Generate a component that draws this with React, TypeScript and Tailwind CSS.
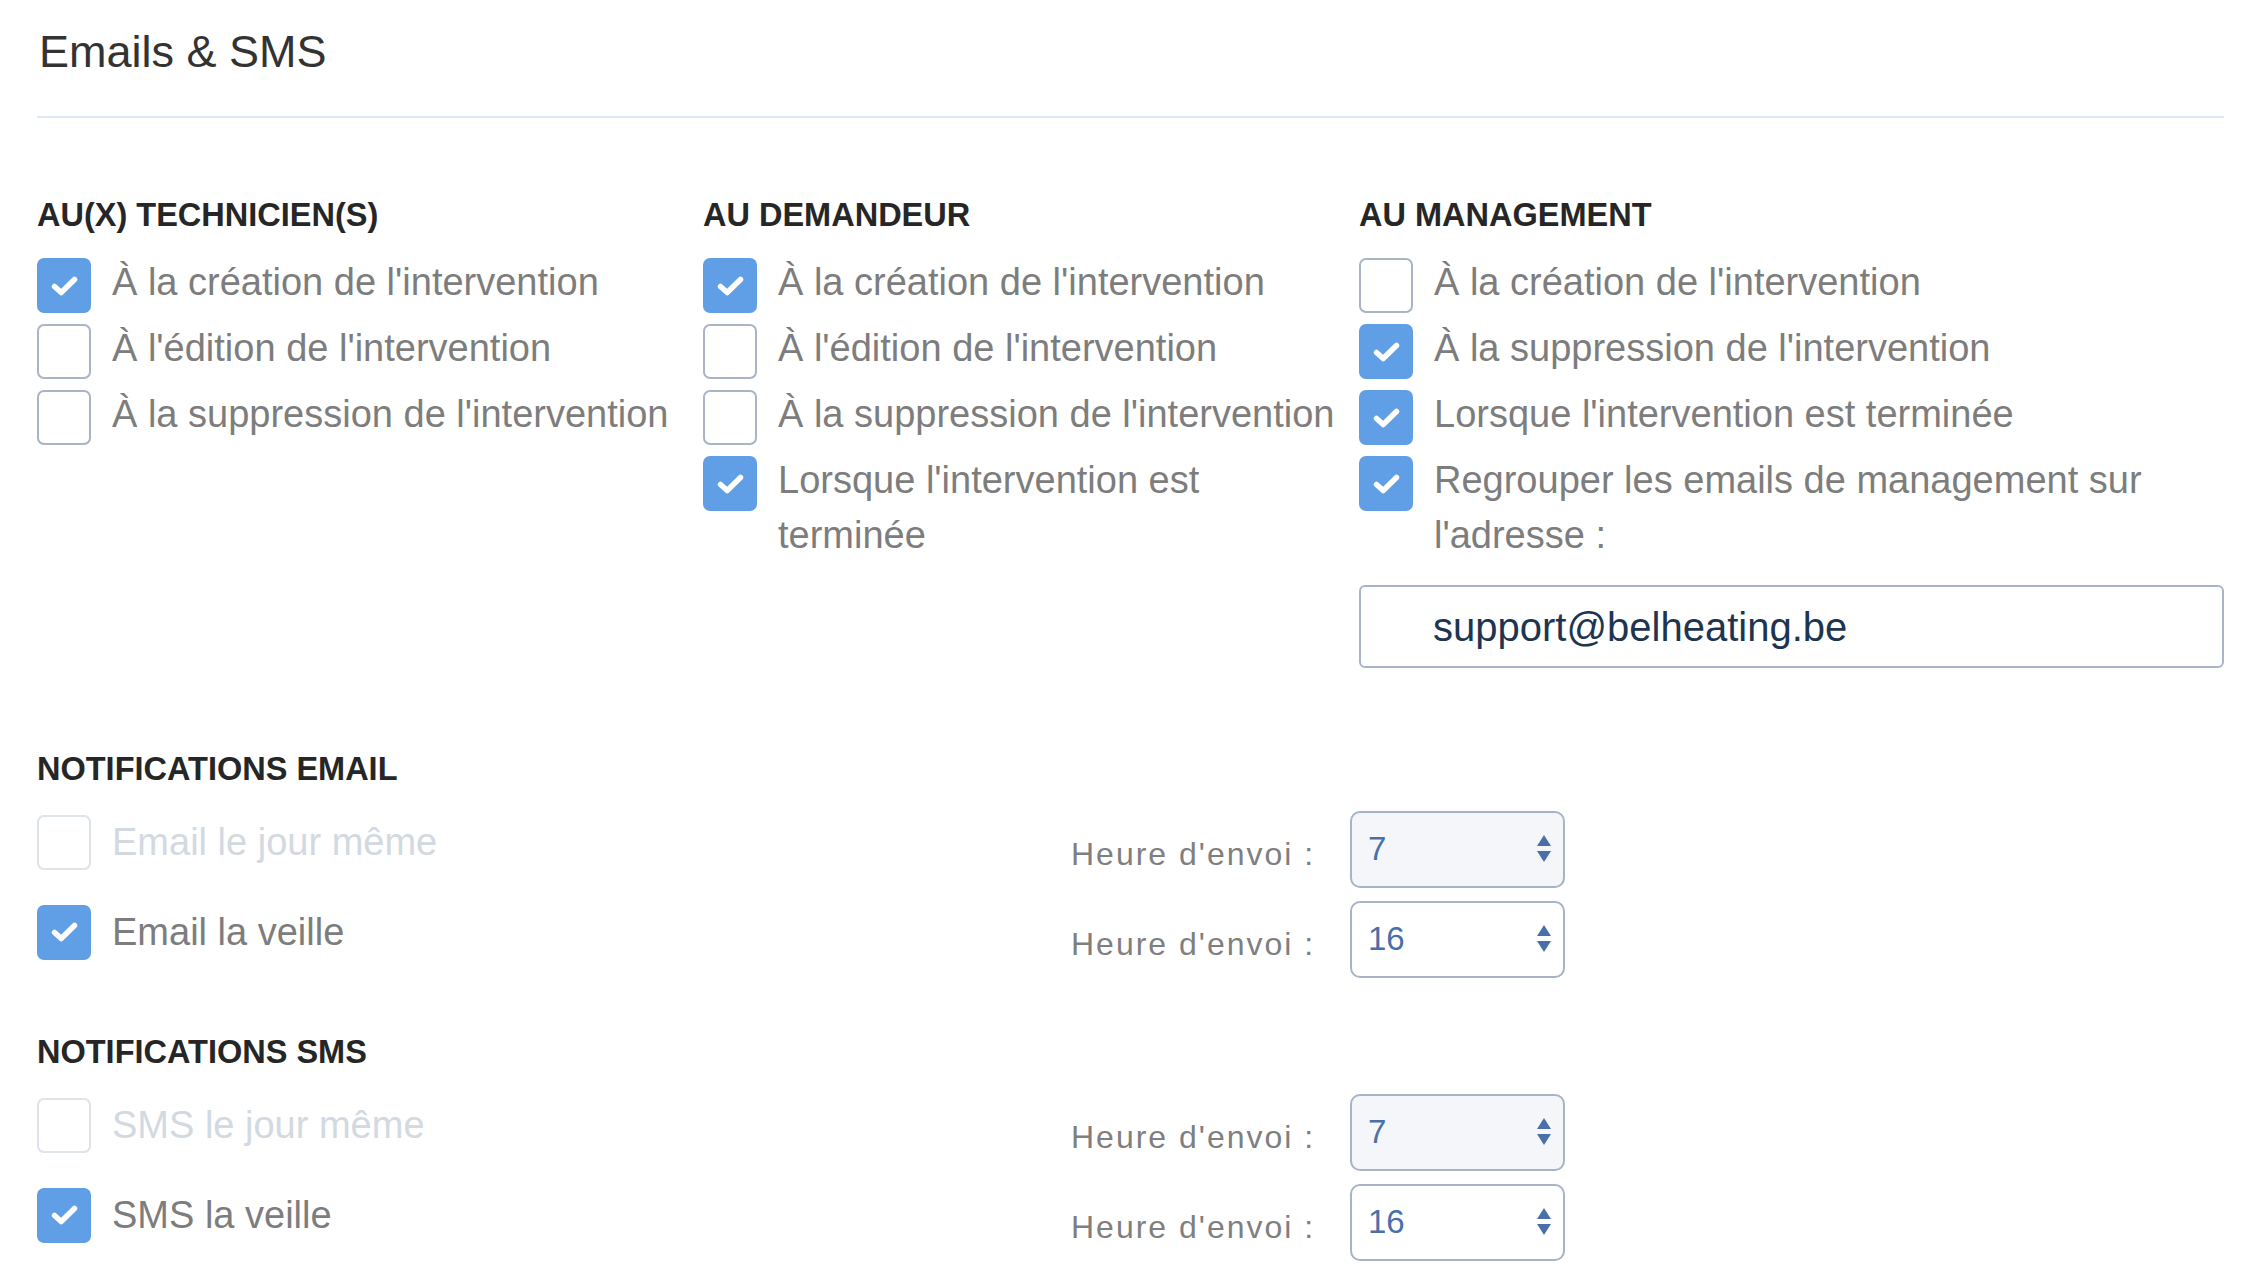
import React from "react";

function Check() {
  return (
    <svg width="27" height="20" viewBox="0 0 27 20" fill="none">
      <path d="M3.5 10.5 L10.2 16.5 L23.5 3.5" stroke="white" strokeWidth="5.5" strokeLinecap="round" strokeLinejoin="round" />
    </svg>
  );
}

function Box({ checked, disabled }: { checked?: boolean; disabled?: boolean }) {
  if (checked) {
    return (
      <div className="flex h-[55px] w-[54px] shrink-0 items-center justify-center rounded-[7px] bg-[#609ee6]">
        <Check />
      </div>
    );
  }
  return (
    <div
      className={
        disabled
          ? "h-[55px] w-[54px] shrink-0 rounded-[7px] border-2 border-[#dfe3ea] bg-white"
          : "h-[55px] w-[54px] shrink-0 rounded-[7px] border-2 border-[#a9b4c5] bg-white"
      }
    />
  );
}

function Row({ checked, children }: { checked?: boolean; children: React.ReactNode }) {
  return (
    <div className="flex items-start gap-[21px]">
      <div className="mt-[3px]">
        <Box checked={checked} />
      </div>
      <div className="text-[38px] leading-[55px] text-[#7d7d7d]">{children}</div>
    </div>
  );
}

function Heading({ children }: { children: React.ReactNode }) {
  return <div className="text-[32.5px] font-bold leading-[40px] text-[#262626]">{children}</div>;
}

function Arrows() {
  return (
    <svg width="14" height="28" viewBox="0 0 14 28">
      <path d="M0 11 L7 0 L14 11 Z" fill="#4a70a8" />
      <path d="M0 16 L14 16 L7 27 Z" fill="#4a70a8" />
    </svg>
  );
}

function Select({ value, shaded }: { value: string; shaded?: boolean }) {
  return (
    <div
      className={
        shaded
          ? "flex h-[77px] w-[215px] items-center justify-between rounded-[10px] border-2 border-[#a7b3c6] bg-[#f4f6f9] pl-[16px] pr-[12px]"
          : "flex h-[77px] w-[215px] items-center justify-between rounded-[10px] border-2 border-[#a7b3c6] bg-white pl-[16px] pr-[12px]"
      }
    >
      <span className="text-[33px] leading-[40px] text-[#4a70a8]">{value}</span>
      <Arrows />
    </div>
  );
}

function NotifRow({ checked, label, value, shaded }: { checked?: boolean; label: string; value: string; shaded?: boolean }) {
  return (
    <div className="flex h-[90px] items-center">
      <div className="mb-[14px] flex w-[1034px] items-center gap-[21px]">
        <Box checked={checked} disabled={!checked} />
        <span className={checked ? "text-[38px] leading-[55px] text-[#7d7d7d]" : "text-[38px] leading-[55px] text-[#d3d9e1]"}>
          {label}
        </span>
      </div>
      <div className="mt-[10px] w-[279px] text-[32px] leading-[40px] tracking-[2px] text-[#7f7f7f]">Heure d'envoi :</div>
      <Select value={value} shaded={shaded} />
    </div>
  );
}

export default function App() {
  return (
    <div className="min-h-screen bg-white pl-[37px] pr-[24px] font-['Liberation_Sans',Arial,sans-serif]">
      <h1 className="pt-[26px] pl-[2px] text-[45px] leading-[52px] text-[#333333]">Emails &amp; SMS</h1>
      <div className="mt-[38px] h-[2px] bg-[#dde8f8]" />

      <div className="mt-[77px] grid grid-cols-[666px_656px_1fr]">
        <div>
          <Heading>AU(X) TECHNICIEN(S)</Heading>
          <div className="mt-[20px] flex flex-col gap-[8px]">
            <Row checked>À la création de l'intervention</Row>
            <Row>À l'édition de l'intervention</Row>
            <Row>À la suppression de l'intervention</Row>
          </div>
        </div>
        <div>
          <Heading>AU DEMANDEUR</Heading>
          <div className="mt-[20px] flex flex-col gap-[8px]">
            <Row checked>À la création de l'intervention</Row>
            <Row>À l'édition de l'intervention</Row>
            <Row>À la suppression de l'intervention</Row>
            <Row checked>
              Lorsque l'intervention est
              <br />
              terminée
            </Row>
          </div>
        </div>
        <div>
          <Heading>AU MANAGEMENT</Heading>
          <div className="mt-[20px] flex flex-col gap-[8px]">
            <Row>À la création de l'intervention</Row>
            <Row checked>À la suppression de l'intervention</Row>
            <Row checked>Lorsque l'intervention est terminée</Row>
            <Row checked>
              Regrouper les emails de management sur
              <br />
              l'adresse :
            </Row>
          </div>
          <div className="mt-[22px] flex h-[83px] items-center rounded-[6px] border-2 border-[#a9b5c7] bg-white pl-[72px]">
            <input
              readOnly
              value="support@belheating.be"
              className="w-full bg-transparent text-[40px] leading-[48px] text-[#1d3550] outline-none"
            />
          </div>
        </div>
      </div>

      <div className="mt-[81px]">
        <Heading>NOTIFICATIONS EMAIL</Heading>
        <div className="mt-[15px]">
          <NotifRow label="Email le jour même" value="7" shaded />
          <NotifRow checked label="Email la veille" value="16" />
        </div>
      </div>

      <div className="mt-[48px]">
        <Heading>NOTIFICATIONS SMS</Heading>
        <div className="mt-[15px]">
          <NotifRow label="SMS le jour même" value="7" shaded />
          <NotifRow checked label="SMS la veille" value="16" />
        </div>
      </div>
    </div>
  );
}
